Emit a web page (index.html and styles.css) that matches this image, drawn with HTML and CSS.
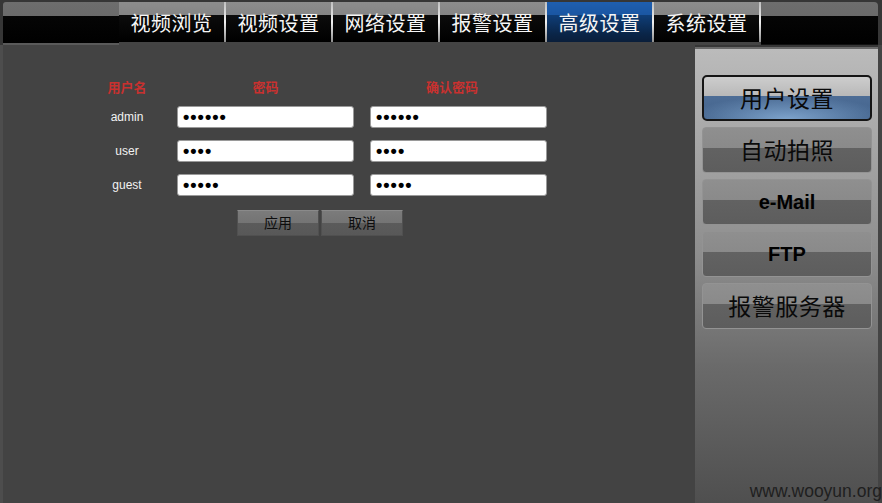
FILE: index.html
```html
<!DOCTYPE html>
<html lang="zh-CN">
<head>
<meta charset="utf-8">
<title>高级设置</title>
<link rel="stylesheet" href="styles.css">
</head>
<body>
<div class="page">
  <div class="topbar">
    <div class="bar-left"></div>
    <nav class="tabs">
      <div class="tab">视频浏览</div>
      <div class="tab">视频设置</div>
      <div class="tab">网络设置</div>
      <div class="tab">报警设置</div>
      <div class="tab active">高级设置</div>
      <div class="tab">系统设置</div>
    </nav>
    <div class="bar-right"></div>
  </div>
  <div class="content">
    <main class="main">
      <div class="form">
        <div class="head">用户名</div>
        <div class="head">密码</div>
        <div class="head">确认密码</div>

        <div class="label">admin</div>
        <input class="field" type="password" value="123456" readonly>
        <input class="field" type="password" value="123456" readonly>

        <div class="label">user</div>
        <input class="field" type="password" value="1234" readonly>
        <input class="field" type="password" value="1234" readonly>

        <div class="label">guest</div>
        <input class="field" type="password" value="12345" readonly>
        <input class="field" type="password" value="12345" readonly>
      </div>
      <div class="actions">
        <button class="btn">应用</button>
        <button class="btn">取消</button>
      </div>
    </main>
    <aside class="side">
      <div class="side-btn selected">用户设置</div>
      <div class="side-btn">自动拍照</div>
      <div class="side-btn latin">e-Mail</div>
      <div class="side-btn latin">FTP</div>
      <div class="side-btn">报警服务器</div>
    </aside>
    <div class="edge"></div>
  </div>
  <div class="watermark">www.wooyun.org</div>
</div>
</body>
</html>
```

FILE: styles.css
```css
* { box-sizing: border-box; }

html, body {
  margin: 0;
  padding: 0;
  width: 882px;
  height: 503px;
  overflow: hidden;
  background: #434343;
  font-family: "Noto Sans CJK SC", "Liberation Sans", sans-serif;
}

.page {
  position: relative;
  width: 882px;
  height: 503px;
  padding-top: 2px;
  background: #363636;
  display: flex;
  flex-direction: column;
}

/* ---------- top bar ---------- */
.topbar {
  margin: 0 4px 0 3px;
  height: 43px;
  display: flex;
  border-radius: 3px 4px 0 0;
  overflow: hidden;
  background: linear-gradient(#6e6e6e 0, #6a6a6a 14px, #050505 14px, #000 100%);
}

.bar-left {
  width: 116px;
  border-bottom: 2px solid #5a5a5a;
}

.tabs {
  display: flex;
  border-bottom: 3px solid #444;
}

.tab {
  width: 107px;
  height: 40px;
  display: flex;
  align-items: center;
  justify-content: center;
  padding-top: 1px;
  color: #f6f6f6;
  font-size: 20px;
  letter-spacing: 0.5px;
  background: linear-gradient(#8d8d8d 0, #858585 13px, #0c0c0c 13px, #000 100%);
  border-right: 2px solid;
  border-image: linear-gradient(#bdbdbd, #f0f0f0 50%, #8a8a8a) 1;
}

.tab.active {
  background: linear-gradient(#1f5fb0 0, #1a56a2 13px, #0f3e78 13px, #0a2548 80%, #0a1e3a 100%);
}

.bar-right {
  flex: 1;
  border-bottom: 1px solid #111;
}

/* ---------- content ---------- */
.content {
  flex: 1;
  display: flex;
}

.main {
  flex: 1;
  background: #434343;
  border-left: 3px solid #4d4d4d;
  padding-top: 35px;
}

.form {
  display: grid;
  grid-template-columns: 94px 177px 177px;
  grid-template-rows: 14px 22px 22px 22px;
  column-gap: 3px;
  row-gap: 12px;
  margin-left: 77px;
}

.form .field:nth-child(3n) { margin-left: 13px; }
.form .head:nth-child(3) { margin-left: 13px; }

.head {
  color: #c9312f;
  font-size: 13px;
  font-weight: 700;
  line-height: 14px;
  text-align: center;
}

.label {
  color: #f2f2f2;
  font-family: "Liberation Sans", Arial, sans-serif;
  font-size: 12px;
  line-height: 22px;
  text-align: center;
}

.field {
  width: 177px;
  height: 22px;
  margin: 0;
  padding: 0 5px;
  border: 1px solid #9a9a9a;
  border-radius: 3px;
  background: #fff;
  color: #000;
  font-family: "Liberation Sans", Arial, sans-serif;
  font-size: 18px;
  font-weight: 700;
  letter-spacing: 1px;
  outline: none;
}

.actions {
  display: flex;
  gap: 2px;
  margin: 14px 0 0 234px;
}

.btn {
  width: 82px;
  height: 26px;
  margin: 0;
  padding: 0 0 3px;
  border: 1px solid #505050;
  border-top-color: #8a8a8a;
  background: linear-gradient(#7b7b7b 0, #747474 50%, #5b5b5b 50%, #585858 100%);
  color: #0d0d0d;
  font-family: "Noto Sans CJK SC", sans-serif;
  font-size: 14px;
}

/* ---------- side panel ---------- */
.side {
  width: 183px;
  margin-top: 2px;
  border-top: 2px solid #6a6a6a;
  background: linear-gradient(#bbbbbb 0, #b3b3b3 8%, #8e8e8e 45%, #6a6a6a 70%, #4f4f4f 100%);
  padding: 26px 6px 0 7px;
  display: flex;
  flex-direction: column;
  gap: 6px;
}

.side-btn {
  height: 46px;
  display: flex;
  align-items: center;
  justify-content: center;
  padding-bottom: 3px;
  border-radius: 4px;
  border: 1px solid #939393;
  background: linear-gradient(#8f8f8f 0, #8a8a8a 46%, #626262 46%, #5d5d5d 100%);
  color: #0a0a0a;
  font-size: 23px;
  letter-spacing: 0.5px;
}

.side-btn.latin {
  font-family: "Liberation Sans", Arial, sans-serif;
  font-weight: 700;
  font-size: 20px;
  letter-spacing: 0;
  color: #000;
  padding-bottom: 0;
  padding-top: 1px;
}

.side-btn.selected {
  border: 2px solid #151515;
  border-radius: 5px;
  background:
    radial-gradient(ellipse 60% 55% at 50% 100%, rgba(150, 190, 230, 0.7), rgba(150, 190, 230, 0) 100%),
    linear-gradient(#cdcdcd 0, #b8b8b8 46%, #4d6d96 46%, #42628b 100%);
  color: #0a0a0a;
}

.edge {
  width: 4px;
  background: #444;
}

.watermark {
  position: absolute;
  right: 0;
  bottom: 1px;
  color: #1f1f1f;
  font-family: "Liberation Sans", Arial, sans-serif;
  font-size: 17.5px;
}
```
